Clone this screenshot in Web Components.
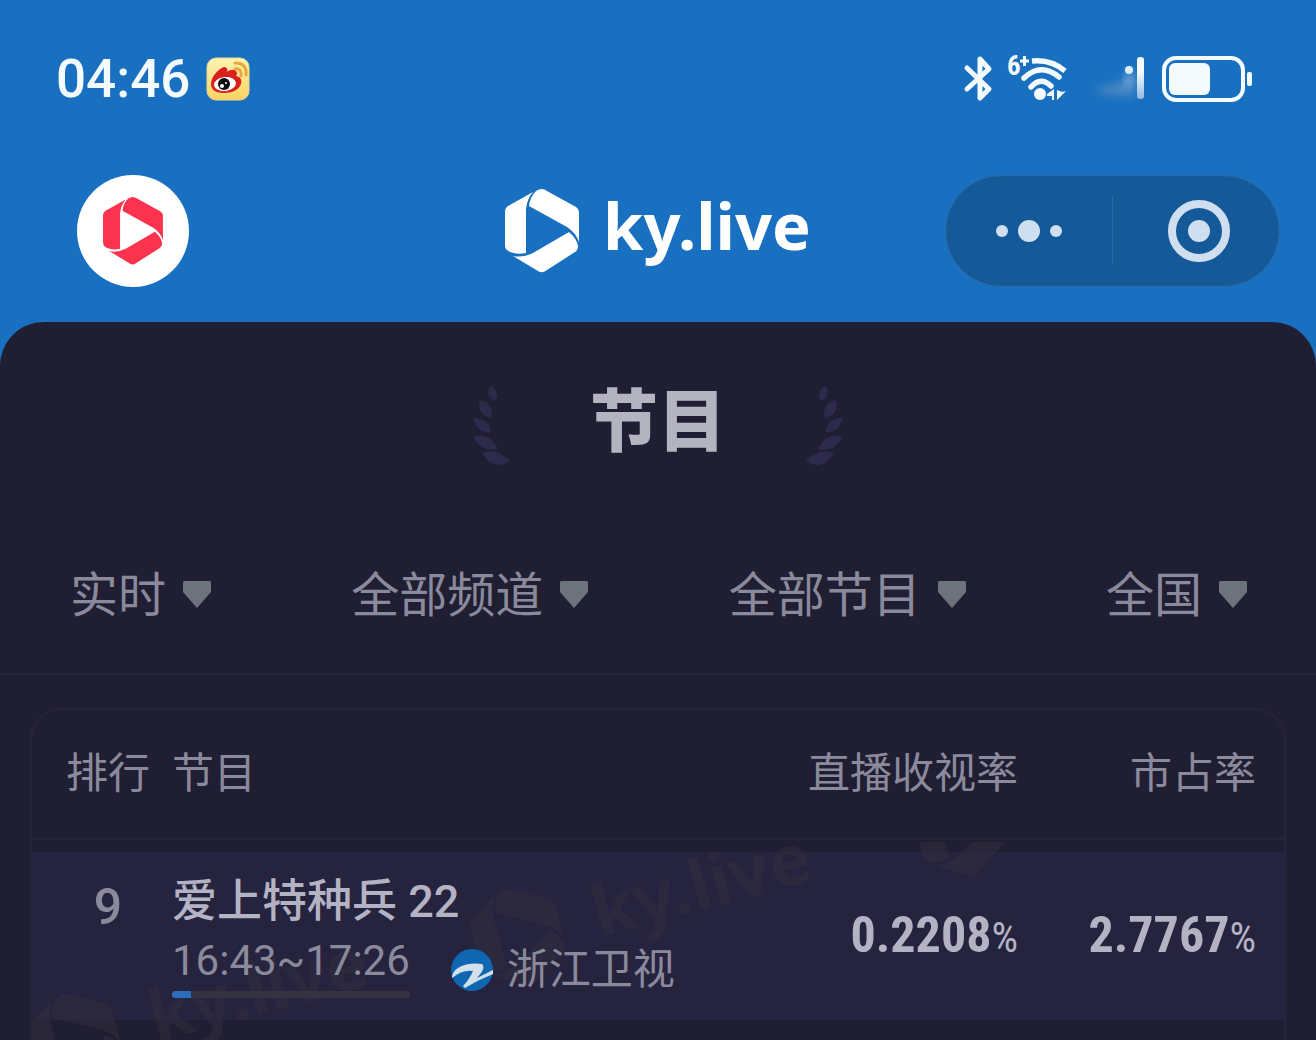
<!DOCTYPE html>
<html lang="zh-CN">
<head>
<meta charset="utf-8">
<meta name="viewport" content="width=device-width, initial-scale=1">
<title>ky.live 节目</title>
<style>
  :root {
    --blue: #1a70c0;
    --panel: #201e33;
    --row: #26233f;
    --line: #26243b;
    --muted: #8b8a9c;
    --bright: #b4b3c4;
    --latin: Roboto, "Noto Sans CJK SC", sans-serif;
  }
  body {
    margin: 0;
    min-height: 100vh;
    display: flex;
    background: var(--blue);
    color: var(--muted);
    font-family: "Noto Sans CJK SC", "Noto Sans", sans-serif;
  }
</style>
</head>
<body>
<ky-app></ky-app>

<template id="t-app">
  <style>
    :host { flex: 1; min-width: 0; display: flex; flex-direction: column; }
    main {
      flex: 1; display: flex; flex-direction: column;
      background: var(--panel); border-radius: 44px 44px 0 0;
      padding-top: 64px;
    }
    ky-filters { margin-top: 93px; }
    ky-ranking { margin: 33px 30px 0; }
  </style>
  <ky-status time="04:46"></ky-status>
  <ky-nav></ky-nav>
  <main>
    <ky-title>节目</ky-title>
    <ky-filters>
      <ky-filter label="时间" value="实时"></ky-filter>
      <ky-filter label="频道" value="全部频道"></ky-filter>
      <ky-filter label="类型" value="全部节目"></ky-filter>
      <ky-filter label="地区" value="全国"></ky-filter>
    </ky-filters>
    <ky-ranking></ky-ranking>
  </main>
</template>

<template id="t-status">
  <style>
    :host { display: flex; align-items: center; justify-content: space-between; box-sizing: border-box; height: 160px; padding: 0 64px 3px 56px; color: #f4fbff; }
    div { display: flex; align-items: center; }
    .left { gap: 16px; }
    time { font: 500 53px/64px var(--latin); }
    svg { display: block; overflow: visible; }
    .bt { margin-right: 14px; }
    .wifi { margin-right: 20px; }
    .sig { margin-right: 16px; }
  </style>
  <div class="left">
    <time></time>
    <svg width="44" height="44" viewBox="0 0 44 44">
      <defs><linearGradient id="wb" x1="0" y1="0" x2="0" y2="1"><stop offset="0" stop-color="#fdf3b4"/><stop offset="1" stop-color="#fbd45f"/></linearGradient></defs>
      <rect x="1" y="1" width="42" height="42" rx="9" fill="url(#wb)" stroke="#e6d98c"/>
      <path d="M5 27C5 20 12 12 18 10c3 0 4 3 3 5 4-3 9-3 10 1 0 1 0 2-1 3 5 1 6 4 5 8-2 6-9 9-17 9C10 36 5 33 5 27Z" fill="#d9201f"/>
      <ellipse cx="19" cy="27" rx="11" ry="7" fill="#fff" transform="rotate(-6 19 27)"/>
      <circle cx="18" cy="27" r="6" fill="#0c0c10"/>
      <circle cx="16" cy="29" r="2" fill="#fff"/><circle cx="20" cy="26" r="1" fill="#fff"/>
      <path d="M29 12c4-1 7 2 6 7M29 6c8-1 12 5 11 12" fill="none" stroke="#e9a93a" stroke-width="3" stroke-linecap="round"/>
    </svg>
  </div>
  <div>
    <svg class="bt" width="28" height="46" viewBox="0 0 28 46" fill="none" stroke="currentColor" stroke-width="5" stroke-linejoin="round" stroke-linecap="round">
      <path d="M1 12 23 33 14 42V3L23 13 1 33"/>
    </svg>
    <svg class="wifi" width="62" height="46" viewBox="0 0 62 46" fill="none" stroke="currentColor" stroke-width="5.500">
      <path d="M24 5Q43 3 57 15"/>
      <path d="M16 22Q33 6 51 21M23 31Q33 20 43 30" stroke-linecap="round"/>
      <circle cx="32" cy="38" r="6" fill="currentColor" stroke="none"/>
      <path d="M46 33v11h-2v-4h-5v-2ZM49 34v10l9-9-4 1Z" fill="currentColor" stroke="none"/>
      <text x="-1" y="19" font-family="Roboto Condensed, sans-serif" font-weight="700" font-size="27" fill="currentColor" stroke="none">6</text>
      <path d="M12 5h9M16.500 0v10" stroke-width="3"/>
    </svg>
    <svg class="sig" width="56" height="46" viewBox="0 0 56 46">
      <defs>
        <linearGradient id="sg" x1="0" y1="0" x2="0" y2="1"><stop offset=".35" stop-color="#f4fbff"/><stop offset="1" stop-color="#8fbbe2"/></linearGradient>
        <filter id="sb" x="-50%" y="-50%" width="200%" height="200%"><feGaussianBlur stdDeviation="4"/></filter>
      </defs>
      <path d="M4 34 22 29 36 22h9v18H36L14 38Z" fill="#9fb6cc" opacity=".35" filter="url(#sb)"/>
      <circle cx="39" cy="14" r="4" fill="#e4f2fd"/><path d="M36 15h7v14h-7Z" fill="#a9cdec" opacity=".6" filter="url(#sb)"/>
      <rect x="47" y="1" width="7" height="42" rx="3" fill="url(#sg)"/>
    </svg>
    <svg width="90" height="46" viewBox="0 0 90 46">
      <rect x="2" y="2" width="79" height="42" rx="12" fill="none" stroke="currentColor" stroke-width="4"/>
      <rect x="7" y="7" width="41" height="32" rx="6" fill="currentColor"/>
      <rect x="85" y="16" width="5" height="14" rx="2" fill="currentColor"/>
    </svg>
  </div>
</template>

<template id="t-mark">
  <style>
    :host { display: block; }
    svg { display: block; width: 100%; height: 100%; }
  </style>
  <svg viewBox="0 0 74 84" fill="currentColor">
    <path d="M0 23Q0 19 3 17L28 3Q22 10 21 20V64Q12 66 5 63L2 61Q0 60 0 56Z"/>
    <path d="M31 2Q37 -2 42 2L71 18Q74 20 74 24V53Q71 44 62 38L24 17Q25 8 31 2Z"/>
    <path d="M64 43Q72 50 73 57Q73 61 70 63L42 81Q37 85 33 82L8 67Q18 69 28 64Z"/>
  </svg>
</template>

<template id="t-wordmark">
  <style>
    :host { display: inline-flex; align-items: center; gap: 24px; font: 700 65px/84px "Noto Sans", "Open Sans", sans-serif; white-space: nowrap; }
    ky-mark { width: var(--mark-w, 74px); height: var(--mark-h, 84px); flex: none; }
    span { padding-bottom: 12px; }
  </style>
  <ky-mark></ky-mark><span>ky.live</span>
</template>

<template id="t-nav">
  <style>
    :host { display: grid; grid-template-columns: 1fr auto 1fr; align-items: center; height: 142px; padding: 0 36px 20px; color: #fff; }
    button { appearance: none; border: 0; margin: 0; padding: 0; background: none; cursor: pointer; display: grid; place-items: center; }
    .home { width: 112px; height: 112px; border-radius: 50%; background: #fff; color: #fb334f; margin-left: 41px; }
    .home ky-mark { width: 60px; height: 68px; }
    .capsule {
      justify-self: end; display: flex; align-items: center; box-sizing: border-box; height: 112px;
      border: 1px solid #2c6ba6; border-radius: 56px; background: #155a98; color: #d0dff0;
    }
    .capsule button { width: 166px; height: 100%; color: inherit; }
    .capsule button:last-child { padding-left: 5px; }
    .capsule i { width: 1px; height: 68px; background: #2a6ba8; }
    svg { display: block; }
  </style>
  <button class="home" aria-label="首页"><ky-mark></ky-mark></button>
  <ky-wordmark></ky-wordmark>
  <div class="capsule">
    <button aria-label="更多"><svg width="66" height="22" viewBox="0 0 66 22" fill="currentColor"><circle cx="6" cy="11" r="6"/><circle cx="33" cy="11" r="11"/><circle cx="60" cy="11" r="6"/></svg></button>
    <i></i>
    <button aria-label="关闭"><svg width="62" height="62" viewBox="0 0 62 62"><circle cx="31" cy="31" r="27" fill="none" stroke="currentColor" stroke-width="8"/><circle cx="31" cy="31" r="11" fill="currentColor"/></svg></button>
  </div>
</template>

<template id="t-laurel">
  <style>
    :host { display: block; }
    svg { display: block; fill: #2d2a4b; }
  </style>
  <svg width="37" height="80" viewBox="0 0 37 80"><path d="M17 0Q26 4 24 12L21 15Q12 9 17 0ZM7 14Q19 16 19 29L17 32Q3 27 7 14ZM0 32Q15 31 18 46Q5 48 0 32ZM1 51Q17 46 25 63Q8 67 1 51ZM9 67Q23 61 37 75Q20 86 9 67Z"/></svg>
</template>

<template id="t-title">
  <style>
    :host { display: flex; justify-content: center; align-items: flex-start; gap: 80px; }
    h1 { margin: 0; font-size: 68px; line-height: 62px; font-weight: 900; color: #b3b4bf; }
    .flip { transform: scaleX(-1); }
  </style>
  <ky-laurel></ky-laurel>
  <h1><slot></slot></h1>
  <ky-laurel class="flip"></ky-laurel>
</template>

<template id="t-filters">
  <style>
    :host { display: flex; justify-content: space-between; padding: 0 69px 50px 70px; border-bottom: 2px solid var(--line); }
  </style>
  <slot></slot>
</template>

<template id="t-filter">
  <style>
    :host { display: block; }
    label { display: flex; align-items: center; gap: 16px; }
    select {
      appearance: none; border: 0; margin: 0; padding: 0; background: none; outline: 0; cursor: pointer;
      font: 400 48px/64px "Noto Sans CJK SC", sans-serif; height: 64px; color: var(--muted);
    }
    svg { display: block; pointer-events: none; fill: #6d737d; padding-top: 6px; }
  </style>
  <label><select></select><svg width="28" height="27" viewBox="0 0 28 27"><path d="M1 0H27L28 1V11L14 27 0 11V1Z"/></svg></label>
</template>

<template id="t-channel">
  <style>
    :host { display: flex; align-items: center; gap: 14px; height: 56px; font-size: 42px; line-height: 48px; }
    svg { display: block; }
    span { padding-bottom: 8px; }
  </style>
  <svg width="42" height="42" viewBox="0 0 42 42">
    <circle cx="21" cy="21" r="21" fill="#0e67b0"/>
    <path d="M1 27C4 16 19 13 31 15 33 17 33 20 30 24L26 29Q34 25 42 21V25Q27 31 14 39L12 37Q18 31 22 22 12 20 1 29Z" fill="#d3dfea"/>
  </svg>
  <span><slot></slot></span>
</template>

<template id="t-watermark">
  <style>
    :host { display: block; overflow: hidden; pointer-events: none; color: #34313f; opacity: .45; --mark-w: 88px; --mark-h: 100px; }
    ky-wordmark, ky-mark { position: absolute; transform: rotate(-15deg); }
    ky-wordmark { font-size: 70px; gap: 34px; }
    .a { left: 438px; top: 144px; }
    .b { left: -5px; top: 249px; }
    div { position: absolute; inset: 132px 0 0; overflow: hidden; }
    ky-mark { left: 885px; top: -64px; width: var(--mark-w); height: var(--mark-h); }
  </style>
  <ky-wordmark class="a"></ky-wordmark>
  <ky-wordmark class="b"></ky-wordmark>
  <div><ky-mark></ky-mark></div>
</template>

<template id="t-ranking">
  <style>
    :host {
      flex: 1; display: block; position: relative;
      border: 2px solid var(--line); border-bottom: 0; border-radius: 32px 32px 0 0;
    }
    table { width: 100%; border-collapse: separate; border-spacing: 0; }
    th, td { padding: 0; text-align: left; font-weight: 400; white-space: nowrap; box-sizing: border-box; }
    th { font-size: 42px; line-height: 56px; height: 130px; padding-bottom: 8px; border-bottom: 2px solid var(--line); }
    .rank { width: 138px; padding-left: 34px; padding-right: 22px; text-align: center; }
    .num { text-align: right; }
    .share { width: 266px; padding-right: 28px; }
    tbody::before { content: ""; display: block; height: 12px; }
    td { background: var(--row); height: 168px; vertical-align: middle; }
    td.rank { vertical-align: top; padding-top: 27px; font: 500 50px/56px var(--latin); }
    td.show { vertical-align: top; padding-top: 23px; }
    td.num { color: var(--bright); font: 700 50px/64px "Roboto Condensed", Roboto, sans-serif; }
    small { font-size: 42px; font-weight: 400; }
    h2 { margin: 0; font: 500 45px/54px var(--latin); color: var(--bright); }
    h2, .sub { position: relative; z-index: 1; }
    .sub { display: flex; align-items: flex-end; gap: 41px; margin-top: 5px; }
    .slot { display: flex; flex-direction: column; gap: 3px; }
    time { font: 400 42px/54px var(--latin); }
    progress { appearance: none; display: block; width: 100%; height: 7px; border: 0; border-radius: 4px; overflow: hidden; background: #34333f; }
    progress::-webkit-progress-bar { background: #34333f; }
    progress::-webkit-progress-value { background: #2a6fbc; }
    ky-watermark { position: absolute; inset: 0; }
  </style>
  <table>
    <thead><tr><th class="rank">排行</th><th>节目</th><th class="num">直播收视率</th><th class="num share">市占率</th></tr></thead>
    <tbody></tbody>
  </table>
  <ky-watermark></ky-watermark>
</template>

<script>
  class Base extends HTMLElement {
    constructor() {
      super();
      const tpl = document.getElementById('t-' + this.localName.slice(3));
      this.attachShadow({ mode: 'open' }).append(tpl.content.cloneNode(true));
    }
    $(sel) { return this.shadowRoot.querySelector(sel); }
  }

  for (const n of ['mark', 'wordmark', 'nav', 'laurel', 'title', 'filters', 'channel', 'watermark'])
    customElements.define('ky-' + n, class extends Base {});

  customElements.define('ky-status', class extends Base {
    connectedCallback() { this.$('time').textContent = this.getAttribute('time'); }
  });

  customElements.define('ky-filter', class extends Base {
    connectedCallback() {
      const s = this.$('select');
      s.setAttribute('aria-label', this.getAttribute('label'));
      s.replaceChildren(new Option(this.getAttribute('value')));
    }
  });

  const shows = [
    { rank: 9, name: '爱上特种兵 22', time: '16:43~17:26', done: 8, channel: '浙江卫视', rate: '0.2208', share: '2.7767' },
  ];

  customElements.define('ky-ranking', class extends Base {
    connectedCallback() {
      this.$('tbody').innerHTML = shows.map(s => `
        <tr>
          <td class="rank">${s.rank}</td>
          <td class="show">
            <h2>${s.name}</h2>
            <div class="sub">
              <div class="slot"><time>${s.time}</time><progress max="100" value="${s.done}" aria-label="播出进度"></progress></div>
              <ky-channel>${s.channel}</ky-channel>
            </div>
          </td>
          <td class="num">${s.rate}<small>%</small></td>
          <td class="num share">${s.share}<small>%</small></td>
        </tr>`).join('');
    }
  });

  customElements.define('ky-app', class extends Base {});
</script>
</body>
</html>
